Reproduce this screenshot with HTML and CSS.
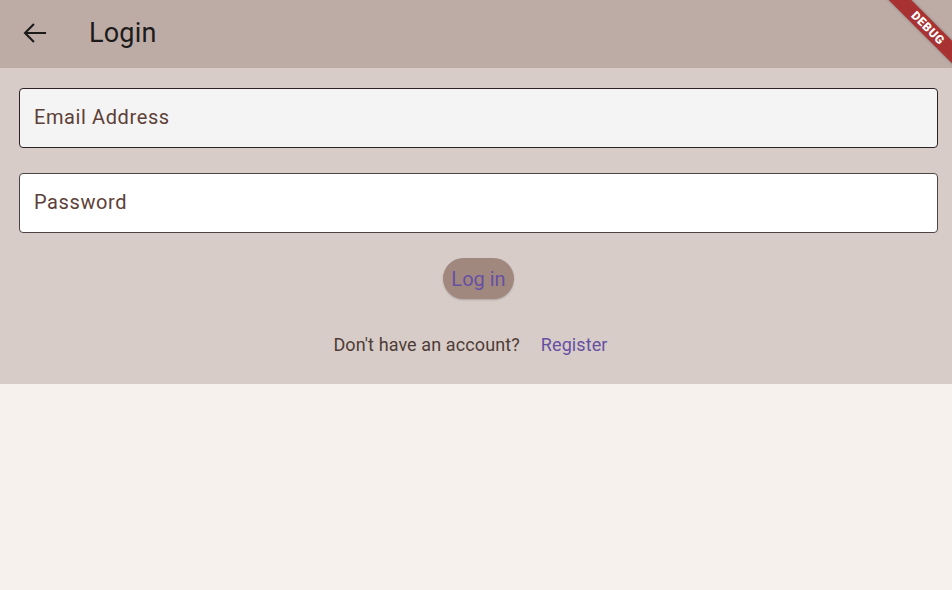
FILE: index.html
```html
<!DOCTYPE html>
<html>
<head>
<meta charset="utf-8">
<link rel="stylesheet" href="styles.css">
</head>
<body>
<header class="appbar">
  <button class="back" aria-label="Back">
    <svg width="26" height="22" viewBox="0 0 26 22"><path d="M23 11H3.5M11.2 2.8L3 11l8.2 8.2" fill="none" stroke="#1d1b1a" stroke-width="2.1" stroke-linecap="square"/></svg>
  </button>
  <h1 class="title">Login</h1>
</header>
<main class="panel">
  <div class="field field-focus">Email Address</div>
  <div class="field">Password</div>
  <div class="btn-row"><button class="login">Log in</button></div>
  <div class="register-row">
    <span class="muted">Don't have an account?</span>
    <a class="link">Register</a>
  </div>
</main>
<div class="debug"><span>DEBUG</span></div>
</body>
</html>
```
FILE: styles.css
```css
* { box-sizing: border-box; }
html, body { margin: 0; padding: 0; }
body {
  width: 952px;
  height: 590px;
  background: #f6f1ec;
  font-family: Roboto, "Noto Sans", sans-serif;
  overflow: hidden;
  position: relative;
}
.appbar {
  height: 68px;
  background: #bdaca6;
  display: flex;
  align-items: center;
  padding-left: 22px;
  padding-bottom: 2px;
}
.back {
  width: 26px;
  height: 22px;
  padding: 0;
  border: 0;
  background: none;
  display: flex;
}
.title {
  margin: 0 0 0 41px;
  font-weight: 400;
  font-size: 27px;
  color: #1d1b1a;
  letter-spacing: 0.2px;
}
.panel {
  background: #d7ccc8;
  padding: 20px 14px 0 19px;
  height: 316px;
  display: flex;
  flex-direction: column;
}
.field {
  height: 60px;
  border: 1px solid #4e4345;
  border-radius: 4px;
  background: #ffffff;
  display: flex;
  align-items: center;
  padding-left: 14px;
  padding-bottom: 2px;
  font-size: 20px;
  color: #5d4037;
  letter-spacing: 0.6px;
  margin-bottom: 25px;
}
.field-focus {
  background: #f4f4f4;
  border-color: #2b2324;
}
.btn-row {
  display: flex;
  justify-content: center;
}
.login {
  height: 41px;
  width: 71px;
  border: 0;
  border-radius: 21px;
  background: #a1887f;
  color: #6750a4;
  font-family: Roboto, sans-serif;
  font-size: 20px;
  padding: 0;
  box-shadow: 0 1px 2px rgba(0,0,0,0.2);
}
.register-row {
  margin-top: 35px;
  display: flex;
  justify-content: center;
  gap: 21px;
  font-size: 18px;
  letter-spacing: 0.1px;
  padding-right: 16px;
}
.muted { color: #4e3c37; }
.link { color: #6750a4; }
.debug {
  position: absolute;
  top: 0;
  right: 0;
  width: 100px;
  height: 100px;
  overflow: hidden;
  pointer-events: none;
}
.debug span {
  position: absolute;
  top: 20px;
  right: -36px;
  width: 120px;
  height: 16px;
  background: #a83232;
  color: #fff;
  font-family: Roboto, sans-serif;
  font-weight: 900;
  font-size: 12px;
  letter-spacing: 0.6px;
  line-height: 16px;
  text-align: center;
  transform: rotate(45deg);
  box-shadow: 0 0 3px rgba(0,0,0,0.3);
}
```
